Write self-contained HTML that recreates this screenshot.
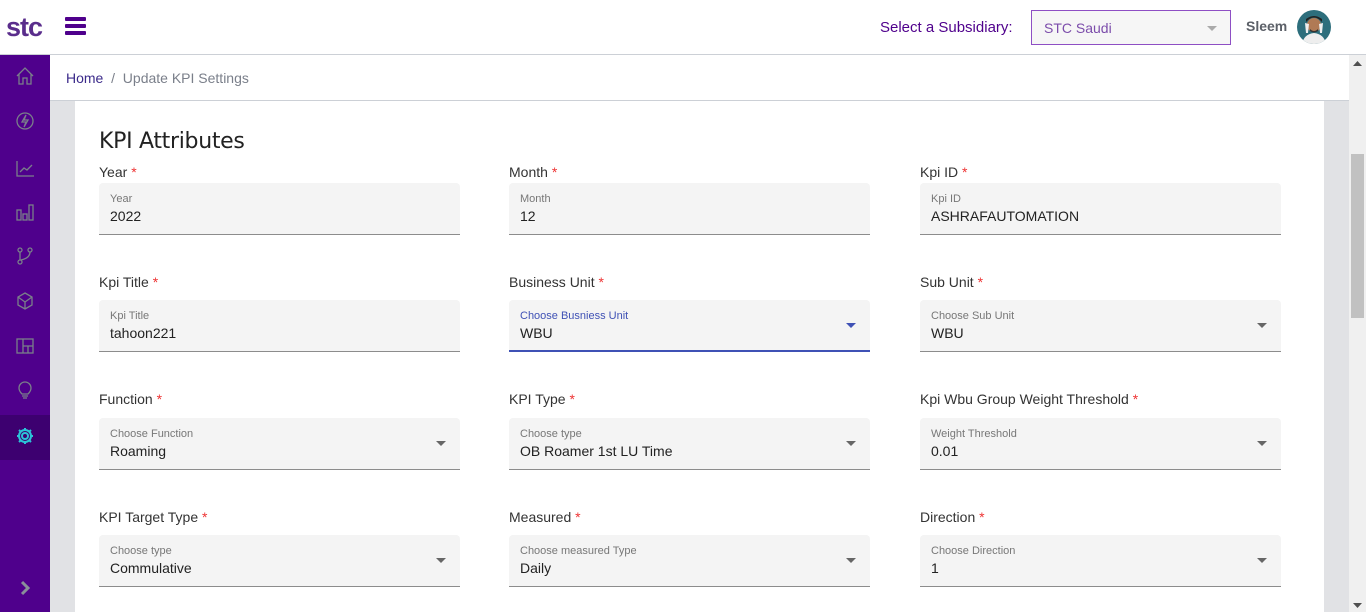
<!DOCTYPE html>
<html><head><meta charset="utf-8"><style>
*{box-sizing:border-box;margin:0;padding:0}
body{width:1366px;height:612px;overflow:hidden;font-family:"Liberation Sans",sans-serif;background:#e1e2e5;position:relative}
.top{position:absolute;left:0;top:0;width:1366px;height:55px;background:#fff;border-bottom:1px solid #ccd0d6}
.logo{position:absolute;left:6px;top:12px;font-size:27px;font-weight:bold;color:#5a2d8c;letter-spacing:-1px}
.ham{position:absolute;left:65px;top:17px;width:21px}
.ham i{display:block;height:4px;background:#4f008c;margin-bottom:3px;border-radius:1px}
.sel-l{position:absolute;left:880px;top:19px;font-size:15px;color:#4f008c}
.sel{position:absolute;left:1031px;top:10px;width:200px;height:35px;border:1px solid #8e4fc4;background:#f6f6f6;font-size:14px;color:#7c4dab;padding:9px 12px}
.sel:after{content:"";position:absolute;right:13px;top:15px;border:5px solid transparent;border-top-color:#aaa}
.user{position:absolute;left:1246px;top:18px;font-size:14px;font-weight:bold;color:#5c6068}
.av{position:absolute;left:1297px;top:10px;width:34px;height:34px;border-radius:50%;background:#2d6e7c;overflow:hidden}
.side{position:absolute;left:0;top:55px;width:50px;height:557px;background:#4f008c}
.side svg{position:absolute;left:15px}
.act{position:absolute;left:0;top:360px;width:50px;height:45px;background:#3d0070}
.bc{position:absolute;left:50px;top:55px;width:1299px;height:46px;background:#fff;border-bottom:1px solid #ccd0d6;font-size:14px;padding:15px 16px;color:#7a7f8a}
.bc a{color:#3b2a8a}
.card{position:absolute;left:75px;top:101px;width:1249px;height:511px;background:#fff}
.sb{position:absolute;left:1349px;top:55px;width:17px;height:557px;background:#f0f0f0}
.thumb{position:absolute;left:2px;top:99px;width:13px;height:164px;background:#c1c1c1}
h1{position:absolute;left:99px;top:129px;font-size:22px;font-weight:normal;color:#222;font-family:"DejaVu Sans","Liberation Sans",sans-serif;letter-spacing:-0.3px}
.lab{position:absolute;font-size:14px;color:#333}
.lab b{color:#e33;font-weight:normal}
.f{position:absolute;width:361px;height:52px;background:#f4f4f4;border-radius:4px 4px 0 0;border-bottom:1px solid #8c8c8c}
.f .s{position:absolute;left:11px;top:10px;font-size:11px;color:#777}
.f .v{position:absolute;left:11px;top:25px;font-size:14px;color:#222}
.f.dd:after{content:"";position:absolute;right:14px;top:23px;border:5px solid transparent;border-top-color:#666}
.f.focus{border-bottom:2px solid #3f51b5}
.f.focus .s{color:#3f51b5}
.f.focus:after{border-top-color:#3f51b5}
</style></head><body>
<div class="top">
<div class="logo">stc</div>
<div class="ham"><i></i><i></i><i></i></div>
<div class="sel-l">Select a Subsidiary:</div>
<div class="sel">STC Saudi</div>
<div class="user">Sleem</div>
<div class="av"><svg width="34" height="34"><path d="M5 34q2-10 12-11q10 1 12 11z" fill="#eee"/><circle cx="17" cy="15" r="7" fill="#b07a55"/><path d="M9 12q8-9 16 0v-3q-8-6-16 0z" fill="#222"/><path d="M8 13l1 10h2l1-9zm18 0l-1 10h-2l-1-9z" fill="#eee"/><path d="M13 19q4 4 8 0v2q-4 3-8 0z" fill="#333"/></svg></div>
</div>
<div class="side">
<div class="act"></div>
<svg style="top:11px" width="20" height="20" fill="none" stroke="#7a7f8a" stroke-width="1.3"><path d="M2 10L10 2l8 8M4 8v10h4v-6h4v6h4V8"/></svg>
<svg style="top:56px" width="20" height="20" fill="none" stroke="#7a7f8a" stroke-width="1.3"><circle cx="10" cy="10" r="8"/><path d="M11 4l-4 7h4l-2 5 4-7H9z"/></svg>
<svg style="top:103px" width="20" height="20" fill="none" stroke="#7a7f8a" stroke-width="1.3"><path d="M2 3v15h17M5 14l4-4 3 2 5-5"/></svg>
<svg style="top:147px" width="20" height="20" fill="none" stroke="#7a7f8a" stroke-width="1.3"><rect x="2" y="8" width="4" height="10"/><rect x="8" y="12" width="4" height="6"/><rect x="14" y="3" width="4" height="15"/></svg>
<svg style="top:191px" width="20" height="20" fill="none" stroke="#7a7f8a" stroke-width="1.3"><circle cx="5" cy="4" r="2"/><circle cx="15" cy="4" r="2"/><circle cx="5" cy="16" r="2"/><path d="M5 6v8M15 6q0 6-9 8"/></svg>
<svg style="top:236px" width="20" height="20" fill="none" stroke="#7a7f8a" stroke-width="1.3"><path d="M10 2l7 4v8l-7 4-7-4V6zM3 6l7 5 7-5M10 11v7"/></svg>
<svg style="top:281px" width="20" height="20" fill="none" stroke="#7a7f8a" stroke-width="1.3"><rect x="2" y="3" width="16" height="14"/><path d="M8 3v14M8 10h10M13 10v7"/></svg>
<svg style="top:325px" width="20" height="20" fill="none" stroke="#7a7f8a" stroke-width="1.3"><path d="M7 14q-3-3-3-6a6 6 0 0112 0q0 3-3 6zM7 16h6M8 18h4"/></svg>
<svg style="top:371px" width="20" height="20" fill="none" stroke="#2bc4d8" stroke-width="2"><circle cx="10" cy="10" r="3"/><path d="M10 2v3M10 15v3M2 10h3M15 10h3M4 4l2 2M14 14l2 2M4 16l2-2M14 6l2-2"/><circle cx="10" cy="10" r="6"/></svg>
<svg style="top:524px" width="20" height="20" fill="none" stroke="#8a8f9a" stroke-width="3"><path d="M7 3l6 6-6 6"/></svg>
</div>
<div class="bc"><a>Home</a> &nbsp;/&nbsp; Update KPI Settings</div>
<div class="card"></div>
<div class="sb"><div class="thumb"></div><svg style="position:absolute;left:4px;top:6px" width="9" height="6"><path d="M0 5L4.5 0 9 5z" fill="#505050"/></svg><svg style="position:absolute;left:4px;top:548px" width="9" height="6"><path d="M0 0L4.5 5 9 0z" fill="#505050"/></svg></div>
<h1>KPI Attributes</h1>

<div class="lab" style="left:99px;top:164px">Year <b>*</b></div>
<div class="f" style="left:99px;top:183px"><div class="s">Year</div><div class="v">2022</div></div>
<div class="lab" style="left:509px;top:164px">Month <b>*</b></div>
<div class="f" style="left:509px;top:183px"><div class="s">Month</div><div class="v">12</div></div>
<div class="lab" style="left:920px;top:164px">Kpi ID <b>*</b></div>
<div class="f" style="left:920px;top:183px"><div class="s">Kpi ID</div><div class="v">ASHRAFAUTOMATION</div></div>

<div class="lab" style="left:99px;top:274px">Kpi Title <b>*</b></div>
<div class="f" style="left:99px;top:300px"><div class="s">Kpi Title</div><div class="v">tahoon221</div></div>
<div class="lab" style="left:509px;top:274px">Business Unit <b>*</b></div>
<div class="f dd focus" style="left:509px;top:300px"><div class="s">Choose Busniess Unit</div><div class="v">WBU</div></div>
<div class="lab" style="left:920px;top:274px">Sub Unit <b>*</b></div>
<div class="f dd" style="left:920px;top:300px"><div class="s">Choose Sub Unit</div><div class="v">WBU</div></div>

<div class="lab" style="left:99px;top:391px">Function <b>*</b></div>
<div class="f dd" style="left:99px;top:418px"><div class="s">Choose Function</div><div class="v">Roaming</div></div>
<div class="lab" style="left:509px;top:391px">KPI Type <b>*</b></div>
<div class="f dd" style="left:509px;top:418px"><div class="s">Choose type</div><div class="v">OB Roamer 1st LU Time</div></div>
<div class="lab" style="left:920px;top:391px">Kpi Wbu Group Weight Threshold <b>*</b></div>
<div class="f dd" style="left:920px;top:418px"><div class="s">Weight Threshold</div><div class="v">0.01</div></div>

<div class="lab" style="left:99px;top:509px">KPI Target Type <b>*</b></div>
<div class="f dd" style="left:99px;top:535px"><div class="s">Choose type</div><div class="v">Commulative</div></div>
<div class="lab" style="left:509px;top:509px">Measured <b>*</b></div>
<div class="f dd" style="left:509px;top:535px"><div class="s">Choose measured Type</div><div class="v">Daily</div></div>
<div class="lab" style="left:920px;top:509px">Direction <b>*</b></div>
<div class="f dd" style="left:920px;top:535px"><div class="s">Choose Direction</div><div class="v">1</div></div>
</body></html>
